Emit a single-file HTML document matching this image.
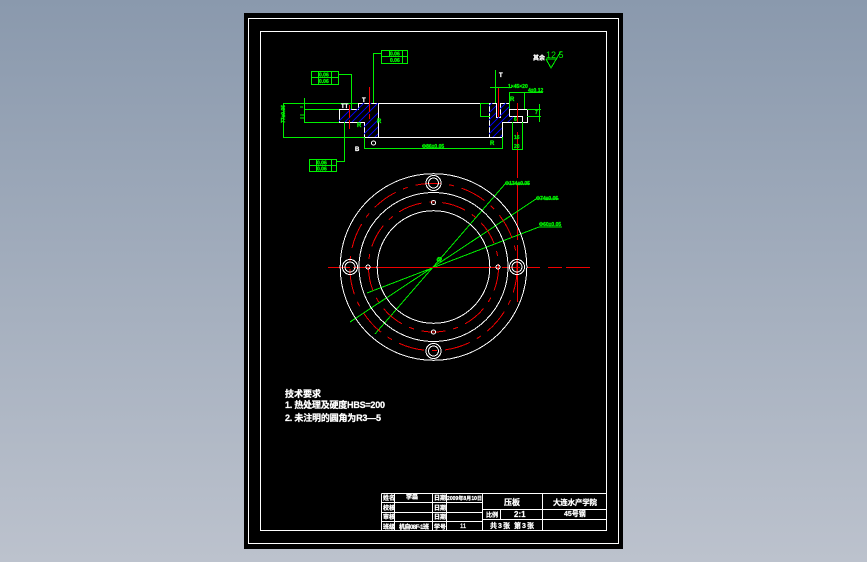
<!DOCTYPE html>
<html><head><meta charset="utf-8"><style>
html,body{margin:0;padding:0;width:867px;height:562px;overflow:hidden;background:linear-gradient(180deg,#8a99ad 0%,#bcc2cd 100%)}
svg{position:absolute;left:0;top:0}
text{font-family:"Liberation Sans","Noto Sans CJK SC",sans-serif}
.w{stroke:#fff;fill:none;stroke-width:1}
.g{stroke:#00f000;fill:none;stroke-width:1}
.r{stroke:#f00000;fill:none;stroke-width:1}
.gt{fill:#00f000;stroke:#00f000;stroke-width:.3;font-size:5px;font-weight:bold}
.wt{fill:#fff;stroke:#fff;stroke-width:.25;font-weight:bold}
</style></head><body>
<svg width="867" height="562" viewBox="0 0 867 562" shape-rendering="crispEdges">
<defs>
<clipPath id="h1"><path d="M358 103H378V137H364V122H339V109H358Z"/></clipPath>
<clipPath id="h2"><path d="M489 103H496V117H500V103H509V116H513V122H502V137H489Z"/></clipPath>
</defs>
<rect x="244" y="13" width="379" height="536" fill="#000"/>
<rect x="248.5" y="18.5" width="370" height="525" class="w"/>
<rect x="260.5" y="31.5" width="346" height="499" class="w"/>

<!-- section white -->
<path class="w" d="M358.5 103.5H378.5V137.5H364.5V122.5H339.5V109.5H358.5Z"/>
<path class="w" d="M378 103.5H489.5M378 137.5H489.5"/>
<path class="w" d="M489.5 103.5V137.5H502.5V122.5H527.5V109.5H509.5V103.5H500.5V117.5H496.5V103.5H489.5M509.5 116.5H522.5V122.5M509.5 109.5V116.5"/>
<!-- hatch -->
<g clip-path="url(#h1)" stroke="#0000e6" stroke-width="1">
<path d="M330 130L360 100M337 130L367 100M344 130L374 100M351 130L381 100M358 133L388 103M358 140L388 110M358 147L388 117M366 146L396 116"/>
</g>
<g clip-path="url(#h2)" stroke="#0000e6" stroke-width="1">
<path d="M480 115L495 100M480 122L502 100M480 129L509 100M480 136L516 100M483 140L520 103M490 140L520 110M497 140L520 117"/>
</g>
<!-- red -->
<path class="r" d="M369.5 87V112M369.5 114V119M349.5 105V118M349.5 120V129"/>
<path class="r" d="M517.5 103V122M517.5 132V178M517.5 183V240M517.5 245V302"/>
<rect x="498" y="87" width="1" height="30" fill="#f00"/>
<!-- green left -->
<g class="g">
<rect x="381.5" y="50.5" width="26" height="13"/>
<path d="M381 56.5H407M389.5 50V57M402.5 50V63M373.5 53.5H381M373.5 53V103"/>
<rect x="311.5" y="71.5" width="27" height="13"/>
<path d="M311 77.5H338M318.5 71V84M331.5 71V84M338 74.5H351.5V109"/>
<rect x="309.5" y="159.5" width="27" height="12"/>
<path d="M309 165.5H336M316.5 159V171M331.5 159V171M336 161.5H344.5V122"/>
<path d="M283.5 103V137M283 103.5H358M283 137.5H364M304.5 98V122M304 109.5H339M304 122.5H339M364.5 137V149M364 148.5H502.5V137"/>
<path d="M300 107H303M300 115H304M300 118H304"/>
<!-- right -->
<path d="M495.5 70V103M490 87.5H512M509.5 92V109M509 92.5H543M524.5 92V109M512.5 122V149M522.5 122V149M512 149.5H523M480.5 103V117M480 103.5H489M480 116.5H490M539.5 104V122M527 109.5H541M527 116.5H541"/>
<path d="M546 59L551 68L561 51M546 59H557"/>
<!-- leaders -->
<path d="M375 334L505 184H529M350 322L536 199H559M367 293L539 227H562"/>
</g>
<!-- dim text -->
<text class="gt" x="422" y="148">Φ86±0.05</text>
<text class="gt" x="508" y="88">1×45×20</text>
<text class="gt" x="528" y="92">4±0.12</text>
<text class="gt" x="505" y="185">Φ134±0.05</text>
<text class="gt" x="536" y="200">Φ74±0.05</text>
<text class="gt" x="539" y="226">Φ60±0.05</text>
<text class="gt" x="285" y="123" transform="rotate(-90 285 123)">77±0.05</text>
<text class="gt" x="546" y="58" style="font-size:9px;font-weight:normal;stroke-width:0">12.5</text>
<text class="gt" x="319" y="76.5" style="font-size:5px">0.06</text>
<text class="gt" x="319" y="83" style="font-size:5px">0.06</text>
<text class="gt" x="390" y="55.5" style="font-size:5px">0.06</text>
<text class="gt" x="390" y="62" style="font-size:5px">0.06</text>
<text class="gt" x="317" y="164.5" style="font-size:5px">0.06</text>
<text class="gt" x="317" y="170.5" style="font-size:5px">0.06</text>
<text class="gt" x="377" y="123" style="font-size:6px">R</text>
<text class="gt" x="357" y="127" style="font-size:6px">R</text>
<text class="gt" x="490" y="145" style="font-size:6px">R</text>
<text class="gt" x="510" y="101" style="font-size:6px">R</text>
<text class="gt" x="514" y="121" style="font-size:5px">6</text>
<text class="gt" x="514" y="139" style="font-size:5px">16</text>
<text class="gt" x="514" y="148" style="font-size:5px">20</text>
<text class="gt" x="535" y="114" style="font-size:5px">7</text>
<text class="wt" x="533" y="60" style="font-size:6px">其余</text>
<text class="wt" x="355" y="151" style="font-size:6px">B</text>
<text class="wt" x="341" y="108" style="font-size:6px">TT</text>
<text class="wt" x="362" y="102" style="font-size:6px">T</text>
<text class="wt" x="499" y="77" style="font-size:6px">T</text>
<circle cx="373.5" cy="143" r="2" class="w"/>
<!-- circle view -->
<g>
<path class="r" d="M328 267.5H350M353 267.5H498M502 267.5H520M527 267.5H540M548 267.5H562M566 267.5H590"/>
<circle cx="433.5" cy="267" r="83.7" class="r" stroke-dasharray="26 8 5 8"/>
<circle cx="433.5" cy="267" r="65" class="r" stroke-dasharray="24 8 5 8"/>
<circle cx="433.5" cy="267" r="93.3" class="w"/>
<circle cx="433.5" cy="267" r="74.5" class="w"/>
<circle cx="433.5" cy="267" r="56.3" class="w"/>
<g class="w">
<circle cx="433.5" cy="183" r="7.5"/><circle cx="433.5" cy="183" r="5"/>
<circle cx="433.5" cy="351" r="7.5"/><circle cx="433.5" cy="351" r="5"/>
<circle cx="350" cy="267" r="7.5"/><circle cx="350" cy="267" r="5"/>
<circle cx="517" cy="267" r="7.5"/><circle cx="517" cy="267" r="5"/>
<circle cx="433.5" cy="202.5" r="2"/><circle cx="433.5" cy="332" r="2"/>
<circle cx="368" cy="267" r="2"/><circle cx="498" cy="267" r="2"/>
</g>
<text class="gt" x="437" y="261" style="font-size:7px" transform="rotate(-30 441 260)">Φ</text>
</g>
<!-- tech req -->
<g class="wt" style="font-size:9px">
<text x="285" y="397" textLength="36">技术要求</text>
<text x="285" y="408" textLength="100">1. 热处理及硬度HBS=200</text>
<text x="285" y="421" textLength="96">2. 未注明的圆角为R3—5</text>
</g>
<!-- title block -->
<g class="w">
<path d="M381.5 493.5H606M381.5 493.5V530M394.5 493V530M432.5 493V530M446.5 493V530M482.5 493V530M542.5 493V530M500.5 509V519M381 502.5H482M381 512.5H482M381 521.5H482M482 509.5H606M482 519.5H606"/>
</g>
<g class="wt" style="font-size:6px">
<text x="383" y="500">姓名</text><text x="406" y="499">李磊</text><text x="434" y="500">日期</text><text x="447" y="500" textLength="35" style="font-size:5px">2009年8月10日</text>
<text x="383" y="510">校核</text><text x="434" y="510">日期</text>
<text x="383" y="519">审核</text><text x="434" y="519">日期</text>
<text x="383" y="529">班级</text><text x="399" y="529" textLength="30">机自08F-1班</text><text x="434" y="529">学号</text><text x="460" y="528" style="font-weight:normal">11</text>
<text x="504" y="505" style="font-size:8px">压板</text>
<text x="553" y="505" style="font-size:7.5px" textLength="44">大连水产学院</text>
<text x="486" y="517">比例</text><text x="514" y="517" style="font-size:8px">2:1</text>
<text x="564" y="516" style="font-size:7px">45号钢</text>
<text x="490" y="528" style="font-size:7px" textLength="44">共3张  第3张</text>
</g>
</svg>
</body></html>
